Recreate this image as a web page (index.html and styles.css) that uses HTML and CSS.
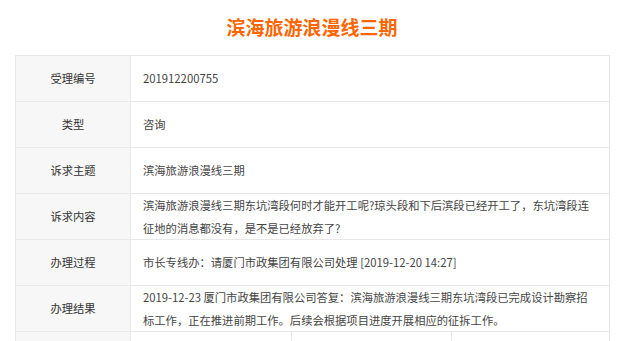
FILE: index.html
```html
<!DOCTYPE html>
<html lang="zh-CN">
<head>
<meta charset="utf-8">
<title>滨海旅游浪漫线三期</title>
<link rel="stylesheet" href="styles.css">
</head>
<body>
<div class="page">
  <h1 class="title">滨海旅游浪漫线三期</h1>
  <table class="info">
    <colgroup><col class="c-label"><col class="c-a"><col class="c-b"><col class="c-c"></colgroup>
    <tr><th>受理编号</th><td colspan="3">201912200755</td></tr>
    <tr><th>类型</th><td colspan="3">咨询</td></tr>
    <tr><th>诉求主题</th><td colspan="3">滨海旅游浪漫线三期</td></tr>
    <tr><th>诉求内容</th><td colspan="3">滨海旅游浪漫线三期东坑湾段何时才能开工呢?琼头段和下后滨段已经开工了，东坑湾段连征地的消息都没有，是不是已经放弃了?</td></tr>
    <tr><th>办理过程</th><td colspan="3">市长专线办：请厦门市政集团有限公司处理 [2019-12-20 14:27]</td></tr>
    <tr><th>办理结果</th><td colspan="3">2019-12-23 厦门市政集团有限公司答复：滨海旅游浪漫线三期东坑湾段已完成设计勘察招标工作，正在推进前期工作。后续会根据项目进度开展相应的征拆工作。</td></tr>
    <tr><th></th><td></td><td></td><td></td></tr>
  </table>
</div>
</body>
</html>
```

FILE: styles.css
```css
html, body {
  margin: 0;
  padding: 0;
  background: #fff;
}
body {
  font-family: "Noto Sans CJK SC", "Noto Sans", sans-serif;
  color: #333;
}
.page {
  width: 594px;
  margin: 0 0 0 15px;
}
.title {
  margin: 0;
  padding: 14px 0 0;
  height: 41px;
  line-height: 26px;
  font-size: 19px;
  font-weight: bold;
  color: #ff6600;
  text-align: center;
}
.info {
  width: 594px;
  border-collapse: collapse;
  table-layout: fixed;
  font-size: 11.3px;
  line-height: 22.5px;
}
.c-label { width: 115px; }
.c-a { width: 161px; }
.c-b { width: 160px; }
.c-c { width: 158px; }
.info th,
.info td {
  border: 1px solid #e8e8e8;
  height: 46px;
  padding: 0 16px 0 12px;
  vertical-align: middle;
  box-sizing: border-box;
}
.info th {
  background: #f7f7f7;
  font-weight: normal;
  text-align: center;
  color: #333;
  padding: 0;
}
.info td {
  color: #444;
  text-align: left;
}
```
